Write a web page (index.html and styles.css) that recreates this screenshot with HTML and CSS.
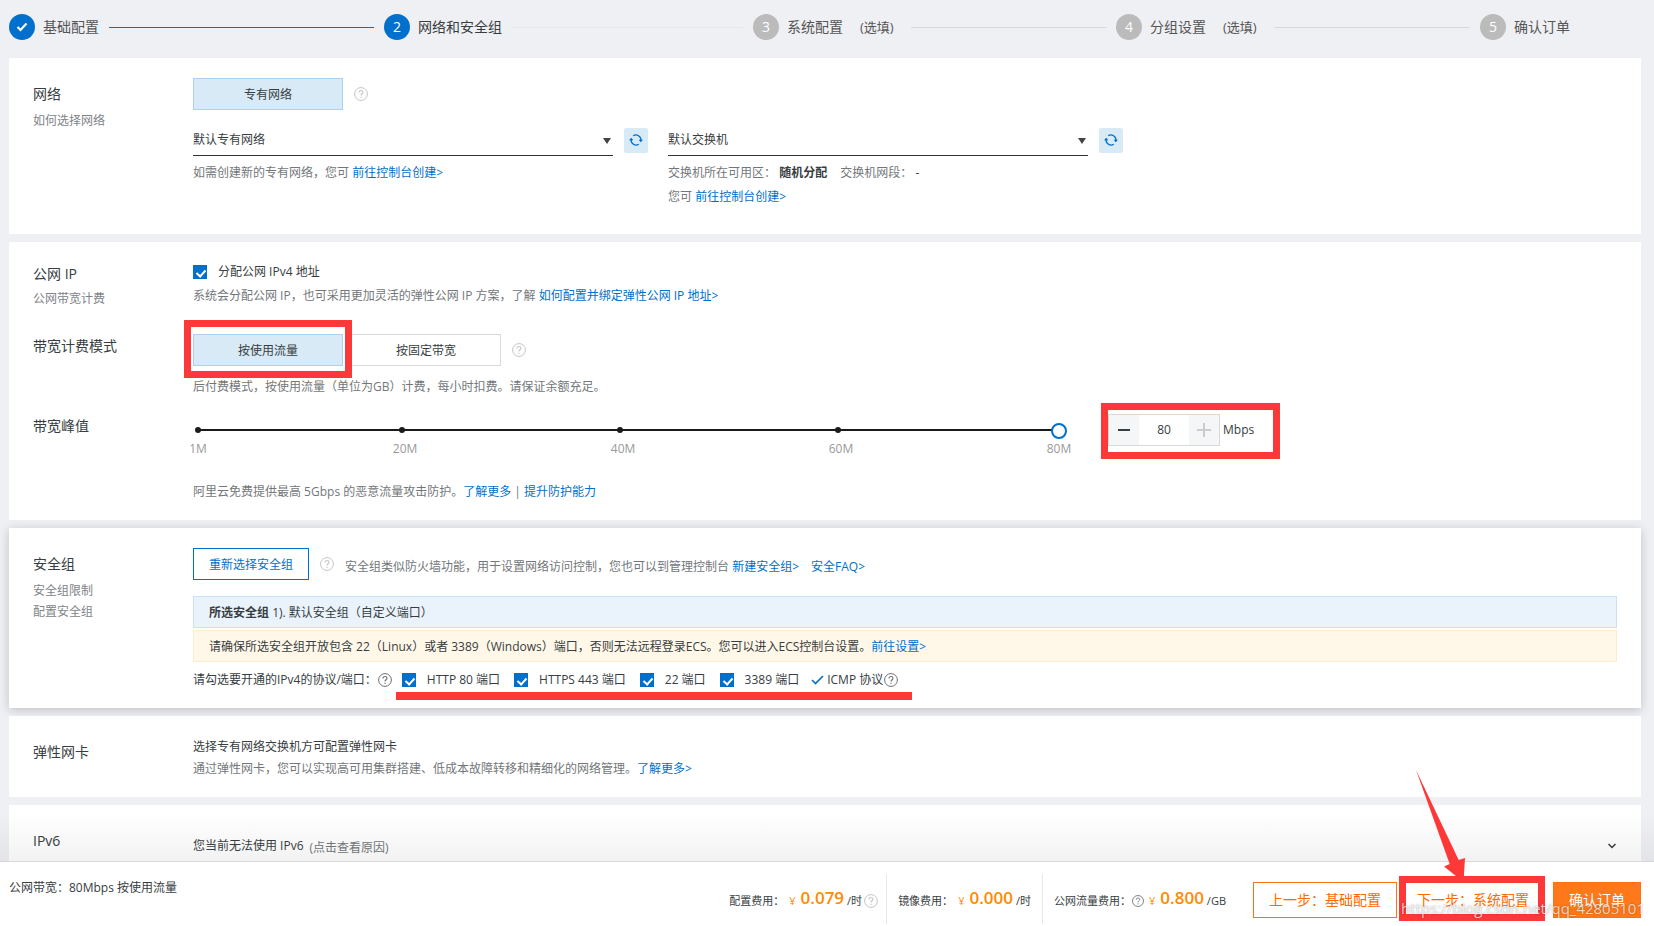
FILE: index.html
```
<!DOCTYPE html>
<html lang="zh-CN">
<head>
<meta charset="utf-8">
<title>网络和安全组</title>
<link rel="stylesheet" href="styles.css">
</head>
<body>
<svg class="sprite" aria-hidden="true">
  <symbol id="help" viewBox="0 0 14 14">
    <circle cx="7" cy="7" r="6.4" fill="none" stroke="currentColor"/>
    <path d="M5 5.5C5 4.2 5.9 3.5 7 3.5s2 .7 2 1.8c0 1.4-2 1.5-2 3.2M7 9.7v1.2" fill="none" stroke="currentColor" stroke-width="1.1"/>
  </symbol>
  <symbol id="refresh" viewBox="0 0 14 14">
    <path d="M2.100 6.500A5 5 0 0 0 9.800 11.200M4.200 2.800A5 5 0 0 1 11.900 7.500" fill="none" stroke="currentColor" stroke-width="1.300"/>
    <path d="M0 7.200L2.200 4.800 4.400 7.200zM9.600 6.800h4.400L11.800 9.200z" fill="currentColor"/>
  </symbol>
</svg>

<main class="page">
  <ol class="steps">
    <li class="step step--done">
      <span class="step-mark"><svg width="12" height="10" viewBox="0 0 12 10"><path d="M1.500 5l3 3L10.500 1.500" fill="none" stroke="currentColor" stroke-width="2.200"/></svg></span>
      <span class="step-name">基础配置</span><span class="step-line"></span>
    </li>
    <li class="step step--current">
      <span class="step-mark">2</span><span class="step-name">网络和安全组</span><span class="step-line"></span>
    </li>
    <li class="step">
      <span class="step-mark">3</span><span class="step-name">系统配置</span><span class="step-note">(选填)</span><span class="step-line"></span>
    </li>
    <li class="step">
      <span class="step-mark">4</span><span class="step-name">分组设置</span><span class="step-note">(选填)</span><span class="step-line"></span>
    </li>
    <li class="step">
      <span class="step-mark">5</span><span class="step-name">确认订单</span>
    </li>
  </ol>

  <section class="panel panel--network">
    <div class="row">
      <div class="side">
        <h2 class="side-title">网络</h2>
        <a class="side-link" href="#">如何选择网络</a>
      </div>
      <div class="content">
        <div class="options">
          <button class="option option--on" type="button">专有网络</button>
          <svg class="help"><use href="#help"/></svg>
        </div>
        <div class="pickers">
          <div class="picker">
            <div class="picker-line">
              <div class="select-wrap"><select class="select" aria-label="专有网络"><option>默认专有网络</option></select></div>
              <button class="refresh" type="button" aria-label="刷新"><svg width="14" height="14"><use href="#refresh"/></svg></button>
            </div>
            <p class="hint">如需创建新的专有网络，您可 <a href="#">前往控制台创建&gt;</a></p>
          </div>
          <div class="picker">
            <div class="picker-line">
              <div class="select-wrap"><select class="select" aria-label="交换机"><option>默认交换机</option></select></div>
              <button class="refresh" type="button" aria-label="刷新"><svg width="14" height="14"><use href="#refresh"/></svg></button>
            </div>
            <p class="hint">交换机所在可用区： <strong class="zone">随机分配</strong> 交换机网段： <span class="dark">-</span></p>
            <p class="hint">您可 <a href="#">前往控制台创建&gt;</a></p>
          </div>
        </div>
      </div>
    </div>
  </section>

  <section class="panel panel--ip">
    <div class="row row--tight">
      <div class="side">
        <h2 class="side-title">公网 IP</h2>
        <a class="side-link" href="#">公网带宽计费</a>
      </div>
      <div class="content">
        <label class="check"><input class="box" type="checkbox" checked>分配公网 IPv4 地址</label>
        <p class="hint hint--near">系统会分配公网 IP，也可采用更加灵活的弹性公网 IP 方案，了解 <a href="#">如何配置并绑定弹性公网 IP 地址&gt;</a></p>
      </div>
    </div>
    <div class="row row--tight row--mode">
      <div class="side"><h2 class="side-title">带宽计费模式</h2></div>
      <div class="content">
        <div class="options">
          <div class="mark mark--mode"><button class="option option--on" type="button">按使用流量</button></div>
          <button class="option" type="button">按固定带宽</button>
          <svg class="help"><use href="#help"/></svg>
        </div>
        <p class="hint hint--mode">后付费模式，按使用流量（单位为GB）计费，每小时扣费。请保证余额充足。</p>
      </div>
    </div>
    <div class="row row--tight row--peak">
      <div class="side"><h2 class="side-title">带宽峰值</h2></div>
      <div class="content">
        <div class="peak">
          <div class="slider">
            <div class="slider-bar">
              <div class="dots"><i></i><i></i><i></i><i></i></div>
              <input class="range" type="range" min="1" max="80" value="80" aria-label="带宽峰值">
            </div>
            <div class="scale"><span>1M</span><span>20M</span><span>40M</span><span>60M</span><span>80M</span></div>
          </div>
          <div class="amount mark mark--amount">
            <div class="stepper">
              <button class="stepper-btn" type="button" aria-label="减少"><svg width="14" height="14"><path d="M1 7h12" stroke="currentColor" stroke-width="2"/></svg></button>
              <input class="stepper-value" type="text" value="80" aria-label="带宽">
              <button class="stepper-btn stepper-btn--off" type="button" aria-label="增加" disabled><svg width="14" height="14"><path d="M0 7h14M7 0v14" stroke="currentColor" stroke-width="2"/></svg></button>
            </div>
            <span>Mbps</span>
          </div>
        </div>
        <p class="hint hint--guard">阿里云免费提供最高 5Gbps 的恶意流量攻击防护。<a href="#">了解更多</a> | <a href="#">提升防护能力</a></p>
      </div>
    </div>
  </section>

  <section class="panel panel--group">
    <div class="row">
      <div class="side">
        <h2 class="side-title">安全组</h2>
        <a class="side-link" href="#">安全组限制</a>
        <a class="side-link" href="#">配置安全组</a>
      </div>
      <div class="content">
        <div class="options">
          <button class="reselect" type="button">重新选择安全组</button>
          <svg class="help"><use href="#help"/></svg>
          <p class="hint hint--group">安全组类似防火墙功能，用于设置网络访问控制，您也可以到管理控制台 <a href="#">新建安全组&gt;</a><a class="faq" href="#">安全FAQ&gt;</a></p>
        </div>
        <p class="bar bar--info"><strong>所选安全组</strong> 1). 默认安全组（自定义端口）</p>
        <p class="bar bar--warn">请确保所选安全组开放包含 22（Linux）或者 3389（Windows）端口，否则无法远程登录ECS。您可以进入ECS控制台设置。<a href="#">前往设置&gt;</a></p>
        <div class="ports">
          <span class="ports-title">请勾选要开通的IPv4的协议/端口：</span>
          <svg class="help help--dark"><use href="#help"/></svg>
          <div class="ports-list">
            <label class="check"><input class="box" type="checkbox" checked>HTTP 80 端口</label>
            <label class="check"><input class="box" type="checkbox" checked>HTTPS 443 端口</label>
            <label class="check"><input class="box" type="checkbox" checked>22 端口</label>
            <label class="check"><input class="box" type="checkbox" checked>3389 端口</label>
            <span class="icmp"><svg class="tick" width="13" height="10" viewBox="0 0 13 10"><path d="M1 5l3.500 3.500L12 1" fill="none" stroke="currentColor" stroke-width="1.600"/></svg>ICMP 协议<svg class="help help--dark"><use href="#help"/></svg></span>
          </div>
        </div>
      </div>
    </div>
  </section>

  <section class="panel panel--nic">
    <div class="row">
      <div class="side"><h2 class="side-title">弹性网卡</h2></div>
      <div class="content">
        <p class="hint dark">选择专有网络交换机方可配置弹性网卡</p>
        <p class="hint">通过弹性网卡，您可以实现高可用集群搭建、低成本故障转移和精细化的网络管理。<a href="#">了解更多&gt;</a></p>
      </div>
    </div>
  </section>

  <section class="panel panel--ipv6">
    <div class="row">
      <div class="side"><h2 class="side-title">IPv6</h2></div>
      <div class="content ipv6">
        <p class="hint dark">您当前无法使用 IPv6</p>
        <p class="hint reason">(点击查看原因)</p>
        <svg class="chevron" width="10" height="8" viewBox="0 0 10 8"><path d="M1.500 2L5 5.500 8.500 2" fill="none" stroke="currentColor" stroke-width="1.500"/></svg>
      </div>
    </div>
  </section>
</main>

<footer class="footer">
  <p class="summary">公网带宽：80Mbps 按使用流量</p>
  <div class="prices">
    <div class="price">配置费用：<span class="yen">¥</span><strong class="sum">0.079</strong><span>/时</span><svg class="help"><use href="#help"/></svg></div>
    <div class="price">镜像费用：<span class="yen">¥</span><strong class="sum">0.000</strong><span>/时</span></div>
    <div class="price">公网流量费用：<svg class="help help--dark help--small"><use href="#help"/></svg><span class="yen">¥</span><strong class="sum">0.800</strong><span>/GB</span></div>
  </div>
  <div class="actions">
    <button class="action" type="button">上一步：基础配置</button>
    <div class="mark mark--next">
      <button class="action" type="button">下一步：系统配置</button>
      <svg class="arrow" width="50" height="112" viewBox="0 0 50 112"><path d="M1 0L43.700 90 50 88 48.500 112 29 96.500 34.700 94z" fill="#fd3838"/></svg>
    </div>
    <button class="action action--main" type="button">确认订单</button>
  </div>
  <span class="watermark">https://blog.csdn.net/qq_42805101</span>
</footer>
</body>
</html>
```
FILE: styles.css
```
* { box-sizing: border-box; }

body {
  margin: 0;
  min-height: 100vh;
  display: flex;
  flex-direction: column;
  background: #eff0f4;
  color: #373d41;
  font: 12px/20px "Open Sans", "Noto Sans CJK SC", sans-serif;
}

h2, p, ol { margin: 0; padding: 0; font-weight: 400; }
a { color: #0070cc; text-decoration: none; }
button, input, select { font: inherit; color: inherit; margin: 0; padding: 0; border-radius: 0; }
.sprite { display: none; }

.page {
  flex: 1;
  display: flex;
  flex-direction: column;
  gap: 8px;
  padding: 0 13px 0 9px;
}

/* Steps */
.steps {
  display: grid;
  grid-template-columns: 375fr 369fr 363fr 364fr 161fr;
  height: 50px;
  padding-top: 14px;
  list-style: none;
}
.step { display: flex; align-items: center; height: 26px; color: #555; font-size: 14px; white-space: nowrap; }
.step-mark {
  display: flex;
  align-items: center;
  justify-content: center;
  width: 26px;
  height: 26px;
  margin-right: 8px;
  border-radius: 50%;
  background: #bbb;
  color: #fff;
}
.step-note { margin-left: 17px; font-size: 13px; }
.step-line { flex: 1; height: 1px; margin: 0 10px; background: #d5d7db; }
.step-note + .step-line { margin-left: 17px; }
.step--done .step-mark, .step--current .step-mark { background: #0070cc; }
.step--done .step-line { background: #0070cc; }
.step--current { color: #373d41; }
.step--current .step-line { background: #e6e7eb; }

/* Panels */
.panel { padding: 20px 24px 16px; background: #fff; }
.panel--network { padding-bottom: 25px; }
.panel--group { padding-bottom: 18px; box-shadow: 0 2px 10px rgba(0, 0, 0, .2); }
.panel--nic { padding: 20px 24px 17px; }
.panel--ipv6 { flex: 1; padding-bottom: 0; }

.row { display: grid; grid-template-columns: 160px 1fr; }
.row--mode { margin-top: 25px; }
.row--peak { margin-top: 15px; }
.side { padding-top: 6px; }
.row--tight .side { padding-top: 2px; }
.side-title { font-size: 14px; line-height: 20px; }
.side-link { display: block; line-height: 21px; color: #808488; }
.side-title + .side-link { margin-top: 6px; }
.row--tight .side-title + .side-link { margin-top: 4px; }

.hint { line-height: 24px; color: #73777a; }
.hint--near { margin-top: 2px; }
.hint--mode { margin-top: 9px; }
.hint--guard { margin-top: 21px; }
.hint--group { padding-top: 6px; }
.panel--nic .hint { line-height: 22px; }
.dark { color: #373d41; }

.help { flex: none; width: 14px; height: 14px; color: #c4c4c4; }
.help--dark { color: #6b7074; }

.options { display: flex; align-items: center; gap: 8px; }
.option {
  display: block;
  width: 150px;
  height: 32px;
  padding-top: 1px;
  border: 1px solid #d9d9d9;
  background: #fff;
}
.option--on { border-color: #abd2f1; background: #d8eaf6; }
.options .help { margin-left: 3px; }
.reselect { height: 32px; padding: 1px 15px 0; border: 1px solid #0070cc; background: #fff; color: #0070cc; }
.options .reselect + .help { margin-right: 3px; }
.faq { margin-left: 12px; }

/* Network selects */
.pickers { display: flex; gap: 20px; margin-top: 14px; }
.picker { flex: 0 1 455px; }
.picker-line { display: flex; align-items: center; gap: 11px; margin-bottom: 5px; }
.select-wrap { position: relative; flex: 1; }
.select-wrap::after {
  content: "";
  position: absolute;
  right: 2px;
  top: 14px;
  border: 4px solid transparent;
  border-top: 6px solid #444;
  border-bottom: 0;
  pointer-events: none;
}
.select {
  display: block;
  width: 100%;
  height: 32px;
  border: 0;
  border-bottom: 1px solid #333;
  background: none;
  appearance: none;
}
.refresh {
  display: flex;
  align-items: center;
  justify-content: center;
  width: 24px;
  height: 25px;
  border: 0;
  border-radius: 2px;
  background: #d8eaf6;
  color: #0070cc;
}
.zone { margin-right: 10px; color: #373d41; }

/* Check boxes */
.check { display: flex; align-items: center; gap: 11px; white-space: nowrap; }
.box { position: relative; width: 14px; height: 14px; background: #0070cc; appearance: none; }
.box:checked::after {
  content: "";
  position: absolute;
  left: 5px;
  top: 3px;
  width: 4px;
  height: 7px;
  border: solid #fff;
  border-width: 0 2px 2px 0;
  transform: rotate(42deg);
}

/* Bandwidth */
.peak { display: flex; align-items: flex-start; gap: 41px; }
.slider { flex: 0 1 877px; margin-left: -3px; padding-top: 8px; }
.slider-bar { position: relative; height: 17px; }
.range { position: relative; display: block; width: 100%; height: 17px; background: none; appearance: none; }
.range::-webkit-slider-thumb {
  width: 16px;
  height: 16px;
  border: 2px solid #0070cc;
  border-radius: 50%;
  background: #fff;
  appearance: none;
}
.dots {
  position: absolute;
  inset: 7px 8px auto;
  display: grid;
  grid-template-columns: 204fr 218fr 218fr 221fr;
  height: 2px;
  background: #1a1a1a;
}
.dots i { width: 6px; height: 6px; margin: -2px 0 0 -3px; border-radius: 50%; background: #1a1a1a; }
.scale {
  display: grid;
  grid-template-columns: 19fr 20fr 20fr 20fr 0;
  padding: 0 8px;
  color: #999;
}
.scale span { width: 40px; margin-left: -20px; text-align: center; }
.amount { display: flex; align-items: center; gap: 3px; }
.stepper { display: flex; width: 112px; height: 32px; border: 1px solid #d9d9d9; }
.stepper-btn {
  display: flex;
  align-items: center;
  justify-content: center;
  width: 30px;
  border: 0;
  background: #f5f6f8;
}
.stepper-btn--off { color: #ccc; }
.stepper-value { width: 50px; border: 0; text-align: center; }

/* Security group */
.bar { padding: 1px 15px 0; border: 1px solid; line-height: 29px; }
.bar--info { margin-top: 16px; border-color: #c8e1f3; background: #eaf3fb; }
.bar--warn { margin-top: 2px; border-color: #fdeecb; background: #fff8e9; }
.ports { display: flex; align-items: center; margin-top: 8px; white-space: nowrap; }
.ports .help { margin-left: 1px; }
.ports-list { position: relative; display: flex; gap: 14px; margin-left: 10px; }
.ports-list::after {
  content: "";
  position: absolute;
  inset: 22px -14px auto -6px;
  height: 8px;
  background: #fd3838;
}
.icmp { display: flex; align-items: center; margin-left: -2px; }
.tick { margin-right: 3px; color: #0070cc; }

.ipv6 { display: flex; align-items: center; padding-top: 7px; }
.reason { margin-left: 6px; padding-top: 4px; }
.chevron { margin-left: auto; }

/* Red outlines */
.mark { position: relative; }
.mark::after { content: ""; position: absolute; border: 7px solid #fd3838; pointer-events: none; }
.mark--mode::after { inset: -14px -9px -12px; }
.mark--amount::after { inset: -11px -26px -13px -7px; }
.mark--next::after { inset: -6px 0 -3px -2px; }
.arrow { position: absolute; left: 14px; bottom: 36px; pointer-events: none; }

/* Footer */
.footer {
  position: sticky;
  bottom: 0;
  display: flex;
  align-items: center;
  height: 65px;
  padding: 0 13px 0 9px;
  border-top: 1px solid #e3e4e6;
  background: #fff;
}
.footer::before {
  content: "";
  position: absolute;
  inset: auto 0 100%;
  height: 50px;
  background: linear-gradient(transparent, rgba(0, 0, 0, .05));
  pointer-events: none;
}
.summary { align-self: flex-start; margin-right: auto; padding-top: 16px; }
.prices { display: flex; margin-right: 16px; padding-top: 9px; font-size: 11px; white-space: nowrap; }
.price { display: flex; align-items: center; height: 50px; padding: 4px 11px 0; }
.price + .price { border-left: 1px solid #e8e8e8; }
.price:first-child { padding-right: 8px; }
.yen { margin-left: 5px; color: #ff8a00; }
.sum { margin: 0 3px 6px 5px; color: #ff8a00; font-size: 17px; font-weight: 600; }
.price .help { margin-left: 2px; }
.price .help--small { width: 12px; height: 12px; margin-left: 1px; }
.actions { display: flex; gap: 4px; padding-top: 12px; }
.action {
  display: block;
  width: 144px;
  height: 36px;
  border: 1px solid #ff7214;
  background: #fff;
  color: #ff6a00;
  font-size: 14px;
  white-space: nowrap;
}
.action--main { width: 88px; margin-left: 4px; background: #ff791a; color: #fff; }
.watermark {
  position: absolute;
  right: 9px;
  bottom: 6px;
  color: rgba(255, 255, 255, .75);
  font-size: 15px;
  line-height: 24px;
  text-shadow: 0 0 2px rgba(0, 0, 0, .4);
  pointer-events: none;
}
```
